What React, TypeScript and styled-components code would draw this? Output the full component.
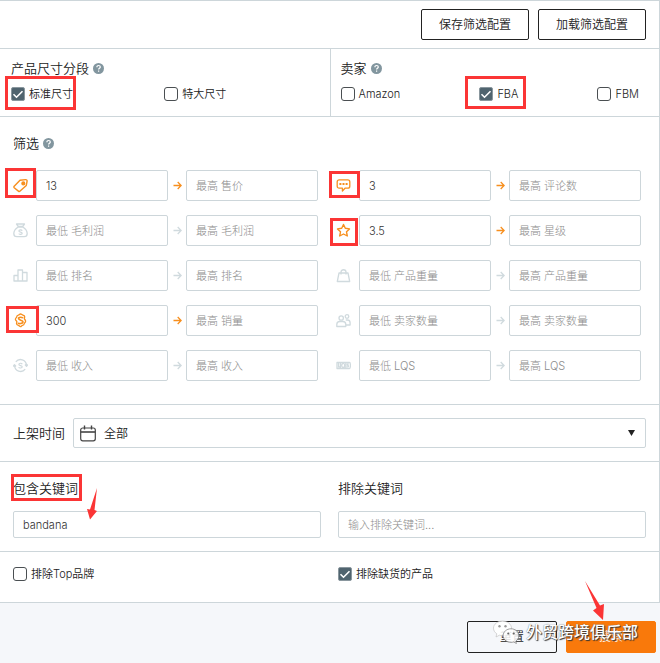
import React, { useId } from "react";
import styled, { createGlobalStyle, css } from "styled-components";

const line = "#cdd6da";
const orange = "#f78f1e";
const muted = "#d0dade";
const red = "#fb3535";

const GlobalStyle = createGlobalStyle`
  * { box-sizing: border-box; }
  body { margin: 0; background: #f5f7fa; }
  body, button, input, select {
    font-family: Inter, "Noto Sans CJK SC", sans-serif;
    font-size: 11px;
    font-weight: 350;
    color: #222;
  }
`;

const Panel = styled.main`
  background: #fff;
  border: 1px solid ${line};
  border-left: 0;
`;

const Toolbar = styled.header`
  display: flex;
  justify-content: flex-end;
  gap: 9px;
  padding: 8px 13px 8px 0;
  border-bottom: 1px solid ${line};
`;

const Button = styled.button<{ $primary?: boolean; $wide?: boolean }>`
  width: ${(p) => (p.$wide ? 108 : 90)}px;
  height: ${(p) => (p.$wide ? 31 : 32)}px;
  padding: 0;
  font-size: 12px;
  line-height: 18px;
  border: 1px solid #222;
  border-radius: 2px;
  background: transparent;
  color: #222;
  ${(p) => p.$primary && css`
    background: #f9790b;
    border-color: #f9790b;
    color: #fff;
  `}
`;

const Segments = styled.section`
  display: grid;
  grid-template-columns: 1fr 1fr;
  border-bottom: 1px solid ${line};
`;

const Segment = styled.div`
  display: flex;
  flex-direction: column;
  gap: 6px;
  padding: 9px 20px 12px 11px;
  & + & { border-left: 1px solid ${line}; padding-left: 10px; }
`;

const Title = styled.h2`
  display: flex;
  align-items: center;
  gap: 4px;
  margin: 0;
  font-size: 13px;
  font-weight: 350;
  line-height: 20px;
`;

const Halves = styled.div`
  display: grid;
  grid-template-columns: 1fr 1fr;
  column-gap: 8px;
`;

const Spread = styled.div`
  display: flex;
  justify-content: space-between;
`;

const CheckLabel = styled.label`
  position: relative;
  display: inline-flex;
  align-items: center;
  justify-self: start;
  gap: 4px;
  line-height: 20px;
`;

const CheckFrame = styled.span`
  display: grid;
  width: 14px;
  height: 14px;
  & > * { grid-area: 1 / 1; }
  svg { display: none; pointer-events: none; }
  input:checked + svg { display: block; }
`;

const CheckInput = styled.input`
  appearance: none;
  margin: 0;
  width: 14px;
  height: 14px;
  border: 1px solid #4a4f52;
  border-radius: 3px;
  background: #fff;
  &:checked { background: #50646f; border-color: #8a979e; border-radius: 2px; }
`;

const Mark = styled.span<{ $x: number; $y: number; $w: number; $h: number }>`
  position: absolute;
  left: ${(p) => p.$x}px;
  top: ${(p) => p.$y}px;
  width: ${(p) => p.$w}px;
  height: ${(p) => p.$h}px;
  border: 3px solid ${red};
  pointer-events: none;
  z-index: 1;
`;

const Filters = styled.section`
  padding: 16px 18px 23px 4px;
  border-bottom: 1px solid ${line};
  ${Title} { padding-left: 9px; margin-bottom: 17px; }
`;

const FilterGrid = styled.div`
  display: grid;
  grid-template-columns: 1fr 1fr;
  gap: 14px 9px;
`;

const FilterRow = styled.div`
  display: grid;
  grid-template-columns: 32px 1fr 18px 1fr;
  align-items: center;
`;

const IconCell = styled.span<{ $active: boolean }>`
  position: relative;
  display: flex;
  justify-content: center;
  align-items: center;
  height: 31px;
  color: ${(p) => (p.$active ? orange : muted)};
`;

const TextInput = styled.input<{ $compact?: boolean }>`
  width: 100%;
  min-width: 0;
  height: ${(p) => (p.$compact ? 27 : 31)}px;
  padding: 0 9px;
  border: 1px solid ${line};
  border-radius: 2px;
  background: #fff;
  color: #333;
  &::placeholder { color: #8c8c8c; font-weight: 300; opacity: 1; }
`;

const DateRow = styled.section`
  display: flex;
  align-items: center;
  gap: 8px;
  padding: 13px;
  border-bottom: 1px solid ${line};
  & > label { font-size: 13px; line-height: 20px; }
`;

const SelectFrame = styled.div`
  flex: 1;
  display: grid;
  grid-template-columns: 30px 1fr 30px;
  align-items: center;
  justify-items: center;
  svg { grid-row: 1; grid-column: 1; z-index: 1; pointer-events: none; }
  svg:last-child { grid-column: 3; }
`;

const Select = styled.select`
  appearance: none;
  grid-row: 1;
  grid-column: 1 / 4;
  width: 100%;
  height: 30px;
  padding: 0 30px;
  font-size: 12px;
  border: 1px solid ${line};
  border-radius: 2px;
  background: #fff;
`;

const Keywords = styled(Halves)`
  column-gap: 17px;
  padding: 16px 13px 13px;
  border-bottom: 1px solid ${line};
`;

const KeywordField = styled.div`
  position: relative;
  display: flex;
  flex-direction: column;
  gap: 13px;
  label { position: relative; align-self: flex-start; font-size: 13px; line-height: 20px; }
`;

const Exclusions = styled(Halves)`
  column-gap: 17px;
  padding: 12px 13px 18px;
`;

const Footer = styled.footer`
  position: relative;
  display: flex;
  justify-content: flex-end;
  gap: 9px;
  padding: 18px 4px 10px;
`;

const Watermark = styled.div`
  position: absolute;
  right: 22px;
  top: 17px;
  display: flex;
  align-items: center;
  gap: 6px;
  font-size: 16px;
  line-height: 24px;
  font-weight: 500;
  color: #fff;
  text-shadow: 1px 1px 1px #333, 0 0 1px #555;
  pointer-events: none;
`;

const KeywordArrow = styled.svg`
  position: absolute;
  left: 73px;
  top: 10px;
  z-index: 1;
  pointer-events: none;
`;

const SearchArrow = styled.svg`
  position: absolute;
  right: 55px;
  top: -22px;
  pointer-events: none;
`;

function Help() {
  return (
    <svg width="11" height="11" viewBox="0 0 11 11" role="img" aria-label="帮助">
      <circle cx="5.5" cy="5.5" r="5.5" fill="#82969f" />
      <path d="M3.9 4.3c0-1.2.7-1.8 1.7-1.8s1.7.6 1.7 1.5c0 1.2-1.7 1.2-1.7 2.4M5.6 7.6v1.1" fill="none" stroke="#fff" strokeWidth="1.2" />
    </svg>
  );
}

type CheckProps = { label: string; checked?: boolean; children?: React.ReactNode };

function Check({ label, checked, children }: CheckProps) {
  return (
    <CheckLabel>
      <CheckFrame>
        <CheckInput type="checkbox" defaultChecked={checked} />
        <svg width="14" height="14" viewBox="0 0 14 14">
          <path d="M2.5 7.2l3 3 6-6" fill="none" stroke="#fff" strokeWidth="1.6" />
        </svg>
      </CheckFrame>
      {label}
      {children}
    </CheckLabel>
  );
}

const icons: Record<string, React.ReactNode> = {
  tag: (
    <>
      <path d="M1.2 8.2L7 2.3l5.6-.7c.9-.1 1.6.5 1.5 1.4l-.8 4.4-6.2 5.7c-.5.5-1.2.4-1.7 0L1.2 9.8c-.4-.5-.4-1.1 0-1.6z" strokeWidth="1.4" />
      <circle cx="10.3" cy="5.4" r="1.4" fill="currentColor" />
    </>
  ),
  chat: (
    <>
      <path d="M3.2 1.8h8.6c1.2 0 2 .8 2 2v4.4c0 1.2-.8 2-2 2H9l-2.600 2.900v-2.900H3.200c-1.200 0-2-.8-2-2V3.800c0-1.200.8-2 2-2z" strokeWidth="1.3" />
      <path d="M3.400 6h2M6.500 6h2M9.600 6h2" strokeWidth="2" />
    </>
  ),
  bag: (
    <>
      <path d="M3.500 1h8L9.700 3.500H5.300zM5.200 4C2.500 5.800 .8 8 .8 10.500c0 2 1.200 3.200 3 3.200h7.400c1.800 0 3-1.200 3-3.200 0-2.500-1.700-4.700-4.400-6.500z" />
      <path d="M9.200 7.700C8.800 6.600 5.900 6.600 5.900 8s3.300.8 3.300 2.200-3 1.500-3.400.4" strokeWidth="1.200" />
    </>
  ),
  star: <path d="M7.5 1.500l1.800 3.800 4.200.6-3 2.900.8 4.200-3.800-2-3.800 2 .8-4.200-3-2.900 4.200-.6z" strokeWidth="1.4" />,
  bars: <path d="M1 13V7.500h4V13M5 13V2h4.500v11M9.500 13V4.500H14V13M.5 13h14" />,
  weight: <path d="M3 5h9l1.700 8.500H1.300zM5 6.500V4c0-3 5-3 5 0v2.500" />,
  dollar: (
    <>
      <path d="M7.5 1c1 0 1.500.9 2.400 1.100s1.800.6 1.800 1.700c0 .9-.5 1.300-.3 2s1.200 1.100 1.200 2.500-1.300 1.500-1.400 2.500-.7 1.500-1.700 1.600-1.100 1.300-2 1.300-1.200-1.100-2.100-1.300-1.900-.6-1.900-1.800.6-1.200.3-2-1.400-1-1.400-2.300 1.200-1.400 1.300-2.400.7-1.700 1.700-1.800S6.500 1 7.500 1z" />
      <path d="M10 5.200C9.600 3.900 5.500 3.700 5.500 5.600S10 6.800 10 8.800 5.500 11.200 5 9.700" strokeWidth="1.600" />
    </>
  ),
  people: (
    <>
      <circle cx="5.200" cy="5" r="2.200" />
      <circle cx="11" cy="3.500" r="1.800" />
      <path d="M.8 13.500v-2c0-2 1.300-3 3-3h3c1.700 0 3 1 3 3v2zM9.800 7h1.500c1.700 0 2.800 1 2.800 2.700V12H10" />
    </>
  ),
  cycle: (
    <>
      <path d="M2.800 3.800C6-.2 13.500 1.200 13.500 8M12.200 11.200C9 15.200 1.500 13.800 1.500 7M0 8.500l1.500-1.700L3 8.500M12 6.500l1.500 1.700L15 6.500" />
      <path d="M9.200 6.200C8.800 4.900 5.900 4.900 5.900 6.400s3.300.9 3.300 2.400-3 1.600-3.500.3" strokeWidth="1.200" />
    </>
  ),
  lqs: (
    <>
      <path d="M1 4.500h12.500c1.200 0 1.200 6 0 6H1zM4.500 4.500v6M9.800 4.500v6" />
      <path d="M2.600 5v4h2M7.200 5.400a1.500 2 0 1 0 0 4 1.500 2 0 1 0 0-4M8 9l1 1.800M12.800 6.100c-2.500-1-2 1-1 1.200s1.200 2.400-1.300 1.400" />
    </>
  ),
};

function Icon({ name }: { name: string }) {
  return (
    <svg width="15" height="15" viewBox="0 0 15 15" fill="none" stroke="currentColor" strokeWidth="1.3" strokeLinejoin="round" aria-hidden="true">
      {icons[name]}
    </svg>
  );
}

type Filter = { icon: string; label: string; value?: string; mark?: [number, number, number, number] };

const filters: Filter[] = [
  { icon: "tag", label: "售价", value: "13", mark: [1, -2, 31, 30] },
  { icon: "chat", label: "评论数", value: "3", mark: [2, 1, 31, 27] },
  { icon: "bag", label: "毛利润" },
  { icon: "star", label: "星级", value: "3.5", mark: [3, 3, 28, 28] },
  { icon: "bars", label: "排名" },
  { icon: "weight", label: "产品重量" },
  { icon: "dollar", label: "销量", value: "300", mark: [2, 1, 33, 27] },
  { icon: "people", label: "卖家数量" },
  { icon: "cycle", label: "收入" },
  { icon: "lqs", label: "LQS" },
];

function FilterRange({ icon, label, value, mark }: Filter) {
  return (
    <FilterRow>
      <IconCell $active={!!value}>
        <Icon name={icon} />
        {mark && <Mark $x={mark[0]} $y={mark[1]} $w={mark[2]} $h={mark[3]} />}
      </IconCell>
      <TextInput aria-label={`最低 ${label}`} placeholder={`最低 ${label}`} defaultValue={value} />
      <IconCell $active={!!value}>
        <svg width="9" height="9" viewBox="0 0 9 9" fill="none" stroke="currentColor" strokeWidth="1.3" aria-hidden="true">
          <path d="M.5 4.500H8M4.700 1L8.200 4.500 4.700 8" />
        </svg>
      </IconCell>
      <TextInput aria-label={`最高 ${label}`} placeholder={`最高 ${label}`} />
    </FilterRow>
  );
}

export default function App() {
  const id = useId();
  return (
    <>
      <GlobalStyle />
      <Panel>
        <Toolbar>
          <Button $wide type="button">保存筛选配置</Button>
          <Button $wide type="button">加载筛选配置</Button>
        </Toolbar>
        <Segments>
          <Segment>
            <Title>产品尺寸分段 <Help /></Title>
            <Halves>
              <Check label="标准尺寸" checked><Mark $x={-6} $y={-8} $w={71} $h={34} /></Check>
              <Check label="特大尺寸" />
            </Halves>
          </Segment>
          <Segment>
            <Title>卖家 <Help /></Title>
            <Spread>
              <Check label="Amazon" />
              <Check label="FBA" checked><Mark $x={-14} $y={-8} $w={61} $h={33} /></Check>
              <Check label="FBM" />
            </Spread>
          </Segment>
        </Segments>
        <Filters>
          <Title>筛选 <Help /></Title>
          <FilterGrid>
            {filters.map((f) => <FilterRange key={f.label} {...f} />)}
          </FilterGrid>
        </Filters>
        <DateRow>
          <label htmlFor={`${id}-date`}>上架时间</label>
          <SelectFrame>
            <svg width="16" height="17" viewBox="0 0 16 17" fill="none" stroke="#444" strokeWidth="1.2" aria-hidden="true">
              <rect x=".7" y="3" width="14.6" height="12.8" rx="2" />
              <path d="M.7 7h14.6" strokeWidth="1.6" />
              <path d="M4.5 .5v4M11.5 .5v4" strokeWidth="1.4" />
            </svg>
            <Select id={`${id}-date`}><option>全部</option></Select>
            <svg width="7" height="6" viewBox="0 0 7 6" aria-hidden="true"><path d="M0 0h7L3.5 6z" fill="#222" /></svg>
          </SelectFrame>
        </DateRow>
        <Keywords>
          <KeywordField>
            <label htmlFor={`${id}-in`}>包含关键词<Mark $x={-2} $y={-4} $w={71} $h={27} /></label>
            <TextInput $compact id={`${id}-in`} defaultValue="bandana" />
            <KeywordArrow width="12" height="32" viewBox="0 0 12 32" aria-hidden="true">
              <path d="M11 0L8.500 22l2.500 1-7 8.500L1 21l3 .5z" fill={red} />
            </KeywordArrow>
          </KeywordField>
          <KeywordField>
            <label htmlFor={`${id}-out`}>排除关键词</label>
            <TextInput $compact id={`${id}-out`} placeholder="输入排除关键词..." />
          </KeywordField>
        </Keywords>
        <Exclusions>
          <Check label="排除Top品牌" />
          <Check label="排除缺货的产品" checked />
        </Exclusions>
      </Panel>
      <Footer>
        <Button type="button">重置</Button>
        <Button type="button" $primary>搜索</Button>
        <Watermark>
          <svg width="28" height="24" viewBox="0 0 28 24" aria-hidden="true">
            <path d="M10.500 1C5.500 1 1.500 4.200 1.500 8.200c0 2.300 1.300 4.300 3.300 5.600L4 17l3.400-1.800c1 .3 2 .4 3.100.4 5 0 9-3.200 9-7.300S15.500 1 10.500 1z" fill="#fff" fillOpacity=".9" stroke="#bbb" strokeWidth=".6" />
            <circle cx="7.500" cy="6.200" r="1.200" fill="#999" /><circle cx="13.500" cy="6.200" r="1.200" fill="#999" />
            <path d="M19 8.800c-4.400 0-7.800 3-7.800 6.800s3.400 6.800 7.800 6.800c1 0 2-.2 2.800-.4l2.600 1.500-.6-2.400c1.900-1.300 3-3.300 3-5.500 0-3.800-3.400-6.800-7.800-6.800z" fill="#fff" fillOpacity=".85" stroke="#777" strokeWidth=".7" />
            <circle cx="16.300" cy="13.500" r="1.100" fill="#666" /><circle cx="21.700" cy="13.500" r="1.100" fill="#666" />
          </svg>
          外贸跨境俱乐部
        </Watermark>
        <SearchArrow width="20" height="40" viewBox="0 0 20 40" aria-hidden="true">
          <path d="M0 0l15 24.500 4-1.500-1 16L8 29.500l3.500-2.500z" fill={red} />
        </SearchArrow>
      </Footer>
    </>
  );
}
